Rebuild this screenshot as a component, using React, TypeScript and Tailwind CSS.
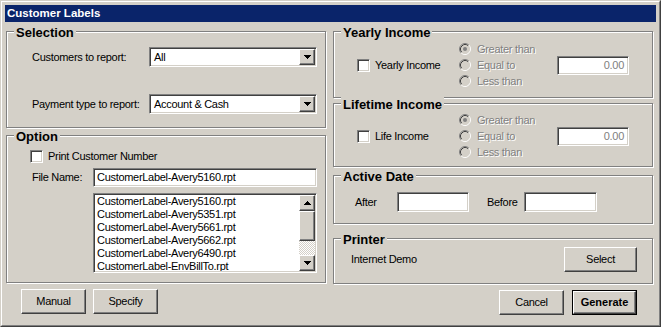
import React from 'react';

const face = 'bg-[#d4d0c8]';
const sunken =
  'border border-t-[#808080] border-l-[#808080] border-b-white border-r-white shadow-[inset_1px_1px_0_#404040,inset_-1px_-1px_0_#d4d0c8]';
const raised =
  'border border-t-white border-l-white border-b-[#404040] border-r-[#404040] shadow-[inset_-1px_-1px_0_#808080]';
const dim = 'text-[#808080] [text-shadow:1px_1px_0_#fff]';
const bold = 'font-bold tracking-normal';

function Group({ title, className = '', children }: { title: string; className?: string; children?: React.ReactNode }) {
  return (
    <div className={`relative border border-[#808080] shadow-[inset_1px_1px_0_#fff,1px_1px_0_#fff] ${className}`}>
      <span className={`absolute -top-[7px] left-[7px] bg-[#d4d0c8] px-[2px] text-[13px] leading-[15px] text-black ${bold}`}>
        {title}
      </span>
      {children}
    </div>
  );
}

function Arrow({ up }: { up?: boolean }) {
  const rows = up ? [3, 2, 1, 0] : [0, 1, 2, 3];
  return (
    <svg width="7" height="4" viewBox="0 0 7 4" shapeRendering="crispEdges">
      {rows.map((inset, y) => (
        <rect key={y} x={inset} y={y} width={7 - inset * 2} height={1} fill="#000" />
      ))}
    </svg>
  );
}

function Combo({ value }: { value: string }) {
  return (
    <div className={`flex h-[20px] w-[168px] items-center bg-white p-[1px] ${sunken}`}>
      <span className="flex-1 pl-[3px]">{value}</span>
      <div className={`flex h-[16px] w-[16px] items-center justify-center ${face} ${raised}`}>
        <Arrow />
      </div>
    </div>
  );
}

function Check() {
  return <div className={`h-[13px] w-[13px] shrink-0 bg-white ${sunken}`} />;
}

function Radio({ checked }: { checked?: boolean }) {
  return (
    <svg width="12" height="12" viewBox="0 0 12 12" className="shrink-0">
      <circle cx="6" cy="6" r="5" fill="#d4d0c8" />
      <path d="M2.11 9.89A5.5 5.5 0 0 1 9.89 2.11" fill="none" stroke="#808080" />
      <path d="M9.89 2.11A5.5 5.5 0 0 1 2.11 9.89" fill="none" stroke="#fff" />
      <path d="M2.82 9.18A4.5 4.5 0 0 1 9.18 2.82" fill="none" stroke="#404040" />
      <path d="M9.18 2.82A4.5 4.5 0 0 1 2.82 9.18" fill="none" stroke="#d4d0c8" />
      {checked && <circle cx="6" cy="6" r="2" fill="#808080" />}
    </svg>
  );
}

function Button({ label, className = '', isDefault }: { label: string; className?: string; isDefault?: boolean }) {
  if (isDefault) {
    return (
      <div className={`border border-black ${className}`}>
        <div className={`flex h-full w-full items-center justify-center text-[11px] ${bold} ${raised}`}>{label}</div>
      </div>
    );
  }
  return <div className={`flex items-center justify-center ${raised} ${className}`}>{label}</div>;
}

function IncomeRow({ label }: { label: string }) {
  return (
    <div className="flex items-center pl-[23px]">
      <div className="flex w-[102px] items-center gap-[5px]">
        <Check />
        <span>{label}</span>
      </div>
      <div className="flex w-[98px] flex-col">
        {['Greater than', 'Equal to', 'Less than'].map((t, i) => (
          <div key={t} className="flex h-[16px] items-center gap-[6px]">
            <Radio checked={i === 0} />
            <span className={dim}>{t}</span>
          </div>
        ))}
      </div>
      <div className={`flex h-[19px] w-[72px] items-center justify-end bg-white pr-[4px] ${sunken}`}>
        <span className="text-[#808080]">0.00</span>
      </div>
    </div>
  );
}

const files = [
  'CustomerLabel-Avery5160.rpt',
  'CustomerLabel-Avery5351.rpt',
  'CustomerLabel-Avery5661.rpt',
  'CustomerLabel-Avery5662.rpt',
  'CustomerLabel-Avery6490.rpt',
  'CustomerLabel-EnvBillTo.rpt',
];

export default function App() {
  return (
    <div
      className={`h-[327px] w-[661px] border border-t-[#d4d0c8] border-l-[#d4d0c8] border-r-[#404040] border-b-[#404040] ${face} font-['Liberation_Sans',Arial,sans-serif] text-[11px] leading-none tracking-[-0.3px] whitespace-nowrap text-black`}
    >
      <div className="flex h-full flex-col border border-t-white border-l-white border-r-[#808080] border-b-[#808080] p-[3px]">
        <div className={`flex h-[17px] items-center bg-[#0a246a] pl-[2px] text-[11.5px] text-white ${bold}`}>
          Customer Labels
        </div>

        <div className="flex gap-[7px] pl-[1px]">
          {/* left column */}
          <div className="flex w-[320px] flex-col">
            <Group title="Selection" className="mt-[9px] h-[97px] pt-[15px] pl-[25px]">
              <div className="flex items-center">
                <span className="w-[117px]">Customers to report:</span>
                <Combo value="All" />
              </div>
              <div className="mt-[27px] flex items-center">
                <span className="w-[117px]">Payment type to report:</span>
                <Combo value="Account &amp; Cash" />
              </div>
            </Group>

            <Group title="Option" className="mt-[7px] h-[148px] pt-[14px]">
              <div className="flex items-center gap-[5px] pl-[23px]">
                <Check />
                <span>Print Customer Number</span>
              </div>
              <div className="mt-[5px] flex items-center pl-[25px]">
                <span className="w-[61px]">File Name:</span>
                <div className={`flex h-[19px] w-[224px] items-center bg-white pl-[3px] ${sunken}`}>
                  CustomerLabel-Avery5160.rpt
                </div>
              </div>
              <div className={`mt-[6px] ml-[86px] flex h-[80px] w-[224px] bg-white p-[1px] ${sunken}`}>
                <div className="flex-1 overflow-hidden pl-[2px]">
                  {files.map((f) => (
                    <div key={f} className="h-[13px] leading-[13px]">
                      {f}
                    </div>
                  ))}
                </div>
                <div className="flex w-[16px] flex-col">
                  <div className={`flex h-[16px] items-center justify-center ${face} ${raised}`}>
                    <Arrow up />
                  </div>
                  <div className={`h-[30px] ${face} ${raised}`} />
                  <div className="flex-1 bg-[image:repeating-conic-gradient(#fff_0_25%,#d4d0c8_0_50%)] bg-[length:2px_2px]" />
                  <div className={`flex h-[16px] items-center justify-center ${face} ${raised}`}>
                    <Arrow />
                  </div>
                </div>
              </div>
            </Group>

            <div className="mt-[6px] flex gap-[7px] pl-[15px]">
              <Button label="Manual" className="h-[25px] w-[65px]" />
              <Button label="Specify" className="h-[25px] w-[65px]" />
            </div>
          </div>

          {/* right column */}
          <div className="flex w-[320px] flex-col">
            <Group title="Yearly Income" className="mt-[9px] h-[67px] pt-[9px]">
              <IncomeRow label="Yearly Income" />
            </Group>

            <Group title="Lifetime Income" className="mt-[5px] h-[64px] pt-[8px]">
              <IncomeRow label="Life Income" />
            </Group>

            <Group title="Active Date" className="mt-[8px] h-[49px] pt-[16px] pl-[21px]">
              <div className="flex items-center">
                <span className="w-[42px]">After</span>
                <div className={`h-[20px] w-[72px] bg-white ${sunken}`} />
                <span className="ml-[18px] w-[37px]">Before</span>
                <div className={`h-[20px] w-[73px] bg-white ${sunken}`} />
              </div>
            </Group>

            <Group title="Printer" className="mt-[14px] h-[46px] pt-[8px] pl-[17px] pr-[15px]">
              <div className="flex items-center justify-between">
                <span>Internet Demo</span>
                <Button label="Select" className="h-[25px] w-[73px]" />
              </div>
            </Group>

            <div className="mt-[6px] flex justify-end gap-[8px] pr-[16px]">
              <Button label="Cancel" className="h-[25px] w-[65px]" />
              <Button label="Generate" className="h-[25px] w-[65px]" isDefault />
            </div>
          </div>
        </div>
      </div>
    </div>
  );
}
